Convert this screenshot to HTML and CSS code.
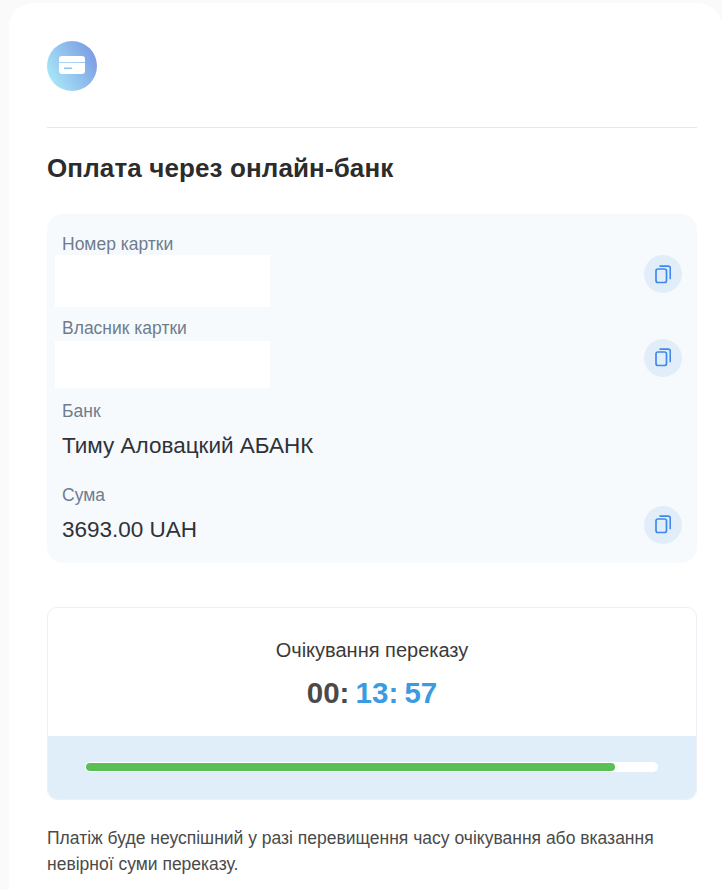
FILE: index.html
```html
<!DOCTYPE html>
<html lang="uk">
<head>
    <meta charset="UTF-8">
    <title>Оплата через онлайн-банк</title>
    <link rel="stylesheet" href="styles.css">
</head>
<body>
<div class="card">
    <div class="card-head">
        <div class="logo">
            <svg width="26" height="26" viewBox="0 0 26 26">
                <path d="M0 6a3 3 0 0 1 3-3h20a3 3 0 0 1 3 3v3.100H0z" fill="#fff"/>
                <path d="M0 9.800h26V18a3 3 0 0 1-3 3H3a3 3 0 0 1-3-3z" fill="#fff"/>
                <rect x="5" y="14.500" width="8" height="1.500" fill="#8cc4ea"/>
            </svg>
        </div>
    </div>

    <h2>Оплата через онлайн-банк</h2>

    <div class="details">
        <div class="row">
            <div class="field">
                <div class="label">Номер картки</div>
                <div class="hidden-value number"></div>
            </div>
            <button class="copy" type="button">
                <svg width="16" height="19" viewBox="0 0 16 19" fill="none" stroke="#4089ec" stroke-width="1.700">
                    <rect x="1" y="4" width="10.500" height="13.500" rx="2"/>
                    <path d="M4.500 1.200h8.800a2 2 0 0 1 2 2v11"/>
                </svg>
            </button>
        </div>
        <div class="row">
            <div class="field">
                <div class="label">Власник картки</div>
                <div class="hidden-value owner"></div>
            </div>
            <button class="copy" type="button">
                <svg width="16" height="19" viewBox="0 0 16 19" fill="none" stroke="#4089ec" stroke-width="1.700">
                    <rect x="1" y="4" width="10.500" height="13.500" rx="2"/>
                    <path d="M4.500 1.200h8.800a2 2 0 0 1 2 2v11"/>
                </svg>
            </button>
        </div>
        <div class="row">
            <div class="field">
                <div class="label">Банк</div>
                <div class="value">Тиму Аловацкий АБАНК</div>
            </div>
        </div>
        <div class="row">
            <div class="field">
                <div class="label">Сума</div>
                <div class="value">3693.00 UAH</div>
            </div>
            <button class="copy" type="button">
                <svg width="16" height="19" viewBox="0 0 16 19" fill="none" stroke="#4089ec" stroke-width="1.700">
                    <rect x="1" y="4" width="10.500" height="13.500" rx="2"/>
                    <path d="M4.500 1.200h8.800a2 2 0 0 1 2 2v11"/>
                </svg>
            </button>
        </div>
    </div>

    <div class="waiting">
        <div class="waiting-top">
            <div class="waiting-title">Очікування переказу</div>
            <div class="timer"><span class="dark">00:</span> <span class="blue">13: 57</span></div>
        </div>
        <div class="waiting-bottom">
            <div class="track">
                <div class="fill" style="width: 92.6%"></div>
            </div>
        </div>
    </div>

    <p class="note">Платіж буде неуспішний у разі перевищення часу очікування або вказання невірної суми переказу.</p>
</div>
</body>
</html>
```

FILE: styles.css
```css
html, body {
    height: 100%;
}
body {
    font-family: "Liberation Sans", Arial, sans-serif;
    background: #fafafa;
    margin: 0;
    padding: 3px 0 0 9px;
    box-sizing: border-box;
    overflow: hidden;
}
.card {
    background: #fff;
    border-radius: 24px 24px 0 0;
    padding: 38px 25px 0 38px;
    height: 887px;
    box-sizing: border-box;
}
.card-head {
    height: 86px;
    border-bottom: 1px solid #e8e8e8;
}
.logo {
    width: 50px;
    height: 50px;
    border-radius: 50%;
    background: linear-gradient(60deg, #a6e3f6 15%, #7a9be4 90%);
    display: flex;
    align-items: center;
    justify-content: center;
}
h2 {
    margin: 25px 0 0;
    font-size: 26px;
    line-height: 30px;
    letter-spacing: 0.12px;
    font-weight: bold;
    color: #2c2c2c;
}
.details {
    margin-top: 31px;
    height: 349px;
    box-sizing: border-box;
    padding-top: 20px;
    background: #f6fafd;
    border-radius: 16px;
}
.row {
    display: flex;
    justify-content: space-between;
    align-items: flex-end;
    height: 83.5px;
    padding: 0 15px;
}
.field {
    align-self: flex-start;
}
.label {
    font-size: 17.5px;
    line-height: 20px;
    color: #6f7c8e;
}
.value {
    margin-top: 11px;
    font-size: 22.5px;
    line-height: 28px;
    color: #2f3237;
}
.hidden-value {
    background: #fff;
    width: 215px;
    margin-left: -7px;
}
.hidden-value.number {
    height: 52px;
    margin-top: 1px;
}
.hidden-value.owner {
    height: 47px;
    margin-top: 3px;
}
.copy {
    width: 38px;
    height: 38px;
    padding: 0;
    border: none;
    border-radius: 50%;
    background: #e1eefa;
    display: flex;
    align-items: center;
    justify-content: center;
    margin-bottom: 24.5px;
    cursor: pointer;
}
.waiting {
    margin-top: 44px;
    height: 193px;
    box-sizing: border-box;
    border: 1px solid #edeff7;
    border-radius: 10px;
    overflow: hidden;
    display: flex;
    flex-direction: column;
}
.waiting-top {
    flex: 1;
    text-align: center;
    padding-top: 31px;
}
.waiting-title {
    font-size: 20px;
    line-height: 22px;
    color: #3a3a3a;
}
.timer {
    margin-top: 14px;
    font-size: 29.5px;
    line-height: 36px;
    word-spacing: -2px;
    font-weight: bold;
}
.dark {
    color: #4a4a4a;
}
.blue {
    color: #3a9ae2;
}
.waiting-bottom {
    height: 63px;
    background: #e0eefa;
    padding: 26px 38px 0 37px;
    box-sizing: border-box;
}
.track {
    height: 10px;
    background: #fff;
    border-radius: 5px;
    padding: 1px;
    box-sizing: border-box;
}
.fill {
    height: 8px;
    background: #5cbf55;
    border-radius: 4px;
}
.note {
    margin: 25px 0 0;
    font-size: 17.5px;
    line-height: 26px;
    color: #4a4a4a;
}
```
